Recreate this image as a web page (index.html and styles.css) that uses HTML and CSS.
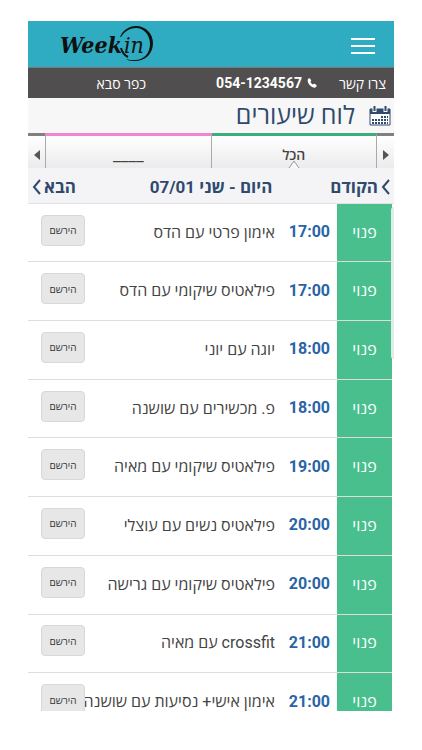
FILE: index.html
```html
<!DOCTYPE html>
<html lang="he" dir="rtl">
<head>
    <meta charset="UTF-8">
    <meta name="viewport" content="width=device-width, initial-scale=1.0">
    <title>Weekin</title>
    <link rel="stylesheet" href="styles.css">
</head>
<body>
    <div class="app">
        <header class="top_bar">
            <button class="menu_btn" type="button" aria-label="תפריט">
                <span></span><span></span><span></span>
            </button>
            <a class="logo" href="#">
                <svg width="98" height="42" viewBox="0 0 98 42" direction="ltr">
                    <text class="logo_week" x="3" y="30">Week</text>
                    <text class="logo_in" x="67" y="30">in</text>
                    <path d="M63 14C66 7 72 3 79 3c10 0 17 8 17 17 0 11-8 18-18 18-3 0-6 0-9-2 3 1 6 1 9 1 9 0 15-7 15-16C93 12 87 5 79 5 72 5 67 9 64 14z" fill="#111"/>
                    <path d="M64 25c1 4 3 7 7 9" fill="none" stroke="#111" stroke-width="2"/>
                </svg>
            </a>
        </header>
        <div class="contact_bar">
            <a href="#">צרו קשר</a>
            <a class="phone" href="tel:0541234567">
                <svg width="10" height="10" viewBox="0 0 10 10"><path d="M1 1C2 0 3 0 4 2c.5 1 0 1.500-.6 2 .6 1.200 1.500 2 2.600 2.500C6.500 6 7 5.500 8 6c2 1 2 2 1 3-1 1-3 1-5-.7C1.500 6.500 0 3 1 1z" fill="#fff"/></svg>
                <bdi>054-1234567</bdi>
            </a>
            <span class="city">כפר סבא</span>
        </div>
        <div class="title_bar">
            <svg width="22" height="20" viewBox="0 0 22 20">
                <path d="M1 3h20v16H1z" fill="#fff" stroke="#2f4a6d"/>
                <path d="M1 3h20v5H1z" fill="#2f4a6d"/>
                <path d="M5.500 1v5M16.500 1v5" stroke="#f7f7f7" stroke-width="4"/>
                <path d="M5.500 0v5M16.500 0v5" stroke="#2f4a6d" stroke-width="2"/>
                <path d="M12 11h7M3 14h16M3 17h16" stroke="#2f4a6d" stroke-width="2" stroke-dasharray="2 1"/>
            </svg>
            <h1>לוח שיעורים</h1>
        </div>
        <div class="tabs">
            <button class="tab_arrow" type="button" aria-label="הקודם">
                <svg width="6" height="10" viewBox="0 0 6 10"><path d="M0 0l6 5-6 5z" fill="#555"/></svg>
            </button>
            <button class="tab tab_all" type="button">הכל
                <svg class="tab_mark" width="12" height="8" viewBox="0 0 12 8"><path d="M1 8l5-7 5 7" fill="#f7f7f7" stroke="#999"/></svg>
            </button>
            <button class="tab tab_other" type="button">____</button>
            <button class="tab_arrow" type="button" aria-label="הבא">
                <svg width="6" height="10" viewBox="0 0 6 10"><path d="M6 0L0 5l6 5z" fill="#555"/></svg>
            </button>
        </div>
        <nav class="day_nav">
            <a href="#"><svg width="9" height="16" viewBox="0 0 9 16"><path d="M8 1L2 8l6 7"/></svg>הקודם</a>
            <span class="today">היום - שני 07/01</span>
            <a class="next" href="#">הבא<svg width="9" height="16" viewBox="0 0 9 16"><path d="M8 1L2 8l6 7"/></svg></a>
        </nav>
        <main class="schedule">
            <table class="lessons">
                <tbody>
                    <tr><td class="status">פנוי</td><td class="time">17:00</td><td class="name">אימון פרטי עם הדס</td><td class="action"><button type="button">הירשם</button></td></tr>
                    <tr><td class="status">פנוי</td><td class="time">17:00</td><td class="name">פילאטיס שיקומי עם הדס</td><td class="action"><button type="button">הירשם</button></td></tr>
                    <tr><td class="status">פנוי</td><td class="time">18:00</td><td class="name">יוגה עם יוני</td><td class="action"><button type="button">הירשם</button></td></tr>
                    <tr><td class="status">פנוי</td><td class="time">18:00</td><td class="name">פ. מכשירים עם שושנה</td><td class="action"><button type="button">הירשם</button></td></tr>
                    <tr><td class="status">פנוי</td><td class="time">19:00</td><td class="name">פילאטיס שיקומי עם מאיה</td><td class="action"><button type="button">הירשם</button></td></tr>
                    <tr><td class="status">פנוי</td><td class="time">20:00</td><td class="name">פילאטיס נשים עם עוצלי</td><td class="action"><button type="button">הירשם</button></td></tr>
                    <tr><td class="status">פנוי</td><td class="time">20:00</td><td class="name">פילאטיס שיקומי עם גרישה</td><td class="action"><button type="button">הירשם</button></td></tr>
                    <tr><td class="status">פנוי</td><td class="time">21:00</td><td class="name">crossfit עם מאיה</td><td class="action"><button type="button">הירשם</button></td></tr>
                    <tr><td class="status">פנוי</td><td class="time">21:00</td><td class="name">אימון אישי+ נסיעות עם שושנה</td><td class="action"><button type="button">הירשם</button></td></tr>
                </tbody>
            </table>
            <div class="scroll_thumb"></div>
        </main>
    </div>
</body>
</html>
```
FILE: styles.css
```css
*{
    padding: 0;
    margin: 0;
    box-sizing: border-box;
}

body{
    height: 100vh;
    padding: 21px 28px 39px;
    background: #fff;
    font-family: Roboto, "Open Sans", "Noto Sans", sans-serif;
    color: #444;
}

a{
    color: inherit;
    text-decoration: none;
}

button{
    font-family: inherit;
    color: inherit;
    border: 0;
    background: none;
    cursor: pointer;
}

.app{
    height: 100%;
    display: flex;
    flex-direction: column;
    overflow: hidden;
}

.app > *{
    flex-shrink: 0;
}

/* header */
.top_bar{
    height: 46px;
    padding: 0 19px 0 29px;
    display: flex;
    align-items: center;
    justify-content: space-between;
    background: #30acc2;
}

.menu_btn{
    width: 24px;
    padding-top: 3px;
    display: flex;
    flex-direction: column;
    gap: 5px;
}

.menu_btn span{
    height: 2px;
    background: #fff;
}

.logo svg{
    display: block;
}

.logo_week{
    font: italic bold 23px "DejaVu Serif Condensed", "DejaVu Serif", serif;
    fill: #111;
}

.logo_in{
    font: italic 23px "DejaVu Serif Condensed", "DejaVu Serif", serif;
    fill: #111;
}

.contact_bar{
    height: 31px;
    padding: 0 8px;
    display: flex;
    align-items: center;
    border-top: 1px solid #777;
    background: #514e4f;
    color: #fff;
    font-size: 14px;
}

.phone{
    margin-right: 22px;
    display: flex;
    align-items: center;
    gap: 5px;
    font-weight: 700;
}

.city{
    margin-right: 70px;
}

.title_bar{
    height: 35px;
    padding: 0 3px;
    display: flex;
    align-items: center;
    gap: 14px;
    background: #f7f7f7;
    color: #2f4a6d;
}

.title_bar h1{
    font-size: 25px;
    font-weight: 400;
    line-height: 35px;
}

/* tabs */
.tabs{
    height: 35px;
    display: flex;
}

.tabs button{
    border-top: 3px solid #808080;
    background: linear-gradient(#fff, #ebebeb);
}

.tab_arrow{
    width: 17px;
    padding-top: 6px;
    display: flex;
    align-items: center;
    justify-content: center;
}

.tabs .tab{
    position: relative;
    flex: 1;
    padding-top: 5px;
    border-right: 1px solid #aaa;
    font-size: 14px;
    font-weight: 600;
}

.tabs .tab_all{
    border-top-color: #3cae7c;
}

.tabs .tab_other{
    border-top-color: #f086d0;
    border-left: 1px solid #aaa;
    font-size: 17px;
    font-weight: 400;
}

.tab_mark{
    position: absolute;
    left: 50%;
    bottom: 0;
    margin-left: -6px;
}

.day_nav{
    height: 36px;
    padding: 2px 4px 0;
    display: grid;
    grid-template-columns: 1fr auto 1fr;
    align-items: center;
    border-bottom: 1px solid #e2e2e6;
    background: #f4f4f6;
    color: #2f4a6d;
    font-size: 17px;
    font-weight: 700;
}

.day_nav a{
    display: flex;
    align-items: center;
    gap: 3px;
}

.day_nav .next{
    justify-content: flex-end;
}

.day_nav path{
    fill: none;
    stroke: #2f4a6d;
    stroke-width: 2;
}

/* lessons */
.app .schedule{
    position: relative;
    flex: 1;
    min-height: 0;
    overflow: hidden;
}

.lessons{
    width: 100%;
    height: 528px;
    table-layout: fixed;
    border-collapse: collapse;
}

.lessons td{
    padding-bottom: 2px;
    border-bottom: 1px solid #ddd;
    vertical-align: middle;
    white-space: nowrap;
}

.lessons .status{
    width: 56px;
    border-right: 2px solid #fff;
    background: #49bf8e;
    color: #fff;
    font-size: 16px;
    text-align: center;
}

.lessons .time{
    width: 55px;
    padding-right: 7px;
    color: #2a64a6;
    font-size: 16px;
    font-weight: 700;
}

.lessons .name{
    padding-right: 7px;
    overflow: hidden;
    font-size: 16px;
}

.lessons .action{
    width: 57px;
}

.action button{
    display: block;
    width: 44px;
    height: 31px;
    margin-bottom: 3px;
    border: 1px solid #d8d8d8;
    border-radius: 4px;
    background: #e7e7e7;
    color: #333;
    font-size: 10px;
}

.scroll_thumb{
    position: absolute;
    top: 3px;
    right: 0;
    width: 3px;
    height: 152px;
    border-radius: 3px 0 0 3px;
    background: #e0ece7;
}
```
